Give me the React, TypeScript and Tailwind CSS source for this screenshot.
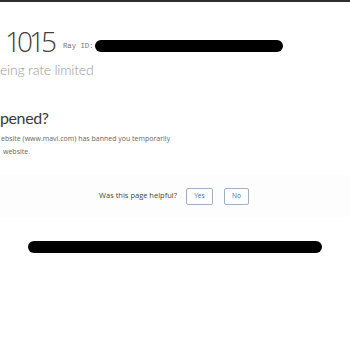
import React from "react"

const sans = { fontFamily: '"Open Sans", "Noto Sans", sans-serif' }
const head = { fontFamily: 'Lato, "Open Sans", sans-serif' }

export default function App() {
  return (
    <div className="w-[350px] h-[350px] bg-white overflow-hidden relative" style={sans}>
      <div className="h-[2px] bg-[#2f2f2f]" />
      {/* header */}
      <div className="pt-[24px] flex items-end">
        <div className="pl-[5px] text-[28px] leading-[30px] font-light tracking-[-4px] text-[#404040]">1015</div>
        <div className="ml-[10px] mb-[4px] flex items-center">
          <span className="text-[7.3px] text-[#777]" style={{ fontFamily: '"Liberation Mono", monospace' }}>
            Ray ID:
          </span>
          <div className="ml-[1px] w-[188px] h-[12px] rounded-full bg-black" />
        </div>
      </div>
      <div className="mt-[4px] text-[14px] leading-[20px] font-light tracking-[-0.2px] text-[#9a9a9a]" style={head}>
        eing rate limited
      </div>

      {/* what happened */}
      <div className="mt-[26px] text-[16px] leading-[24px] tracking-[-0.4px] text-[#3a3a3a]" style={head}>
        pened?
      </div>
      <div className="mt-[2px] pl-[1px] text-[7px] leading-[13px] text-[#666]">
        <div>ebsite (www.mavi.com) has banned you temporarily</div>
        <div className="pl-[2px]">website.</div>
      </div>

      {/* feedback */}
      <div className="mt-[17px] h-[42px] bg-[#fdfdfd] flex items-center justify-center gap-[8px] pr-[2px]">
        <span className="text-[7.5px] text-[#444] mr-[1px]">Was this page helpful?</span>
        <button className="w-[27px] h-[17px] border border-[#9fb0c4] rounded-[2px] text-[6.5px] text-[#2c6fb7] bg-white">
          Yes
        </button>
        <button className="ml-[3px] w-[25px] h-[17px] border border-[#9fb0c4] rounded-[2px] text-[6.5px] text-[#2c6fb7] bg-white">
          No
        </button>
      </div>

      <div className="mt-[24px] flex justify-center">
        <div className="w-[294px] h-[12px] rounded-full bg-black" />
      </div>
    </div>
  )
}
